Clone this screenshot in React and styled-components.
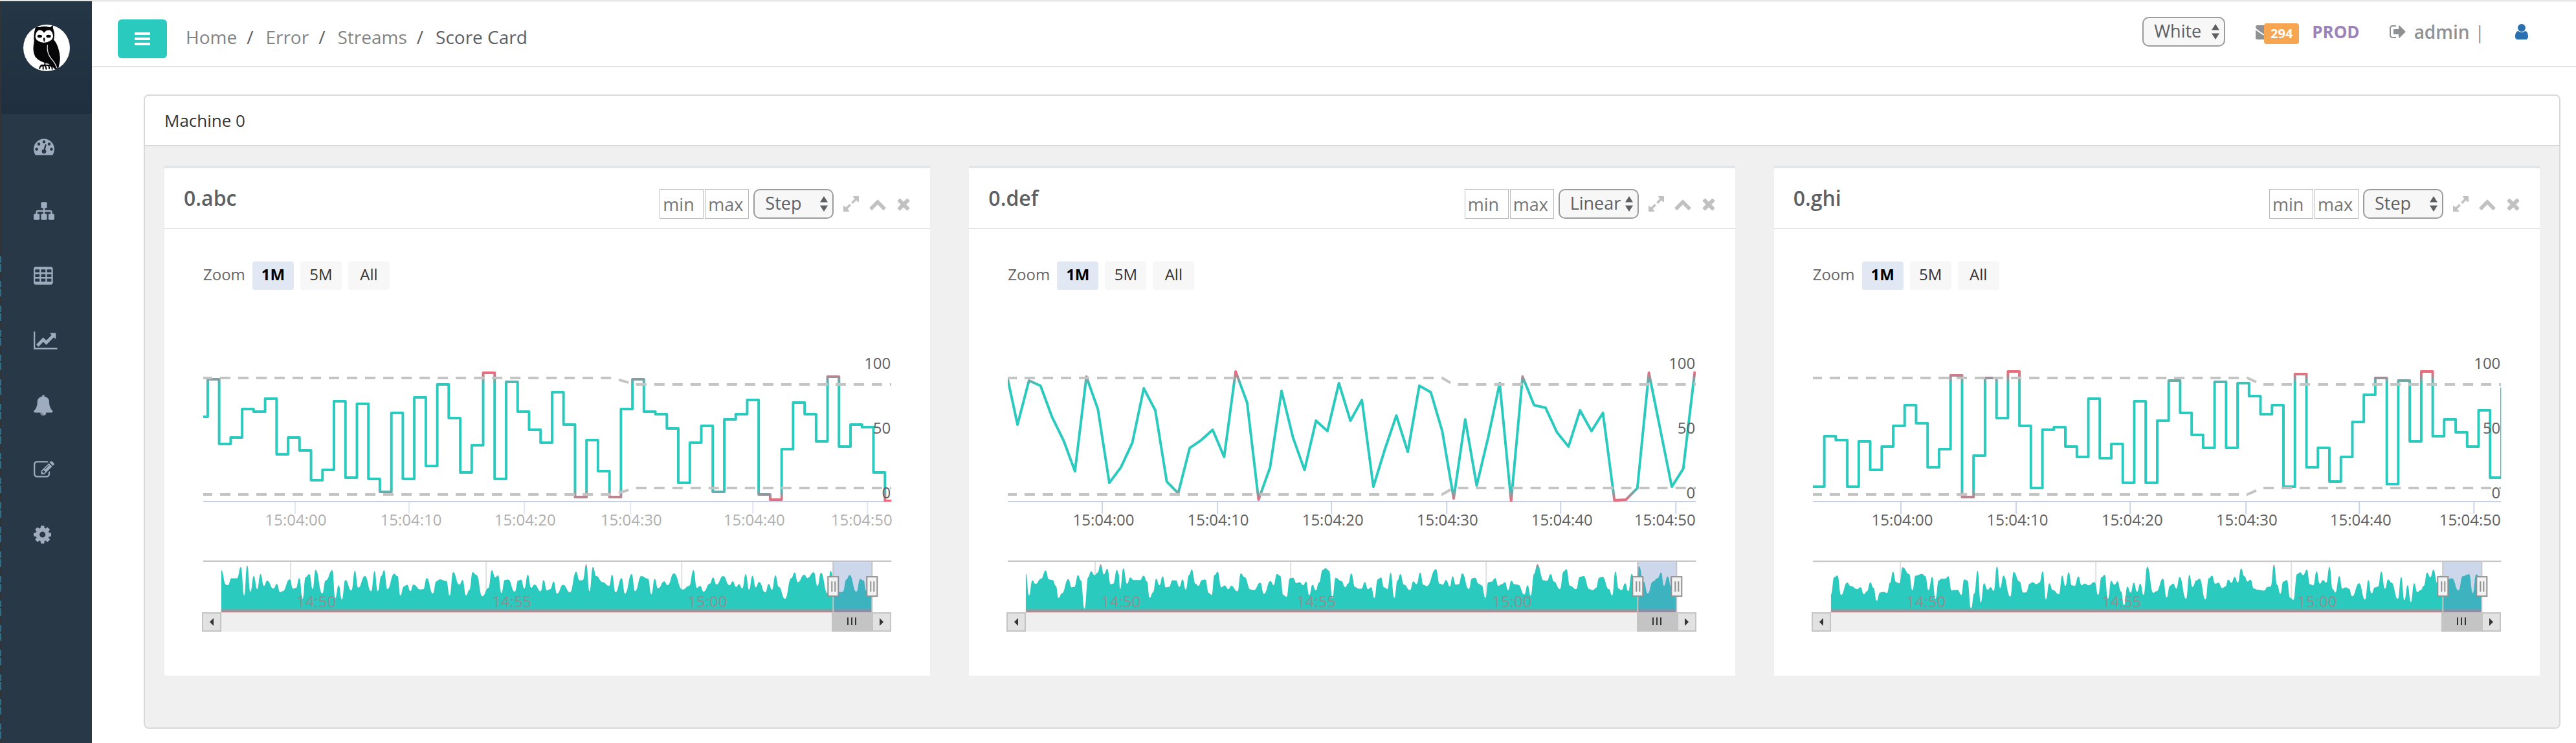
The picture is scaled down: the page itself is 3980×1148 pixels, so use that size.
import React from "react";
import styled, { createGlobalStyle } from "styled-components";

const GlobalStyle = createGlobalStyle`
  *, *::before, *::after { box-sizing: border-box; }
  body {
    margin: 0;
    background: #fff;
    color: #5c6063;
    font-family: "Open Sans", "Noto Sans", sans-serif;
    font-size: 28px;
  }
  button, input, select { font-family: inherit; }
`;

const TEAL = "#2bcabf";
const RED = "#ec6c7e";

/* ---------- icons (1792-unit grid) ---------- */

const ICONS = {
  dashboard: { x: 0, w: 1792, d: "M384 1152q0-53-37.5-90.5t-90.5-37.5-90.5 37.5-37.5 90.5 37.5 90.5 90.5 37.5 90.5-37.5 37.5-90.5zm192-448q0-53-37.5-90.5t-90.5-37.5-90.5 37.5-37.5 90.5 37.5 90.5 90.5 37.5 90.5-37.5 37.5-90.5zm428 481l101-382q6-26-7.5-48.5t-38.5-29.5-48 6.5-30 39.5l-101 382q-60 5-107 43.5t-63 98.5q-20 77 20 146t117 89 146-20 89-117q16-60-6-117t-72-91zm660-33q0-53-37.5-90.5t-90.5-37.5-90.5 37.5-37.5 90.5 37.5 90.5 90.5 37.5 90.5-37.5 37.5-90.5zm-640-640q0-53-37.5-90.5t-90.5-37.5-90.5 37.5-37.5 90.5 37.5 90.5 90.5 37.5 90.5-37.5 37.5-90.5zm448 192q0-53-37.5-90.5t-90.5-37.5-90.5 37.5-37.5 90.5 37.5 90.5 90.5 37.5 90.5-37.5 37.5-90.5zm320 448q0 261-141 483-19 29-54 29h-1402q-35 0-54-29-141-221-141-483 0-182 71-348t191-286 286-191 348-71 348 71 286 191 191 286 71 348z" },
  sitemap: { x: 0, w: 1792, d: "M1792 1248v320q0 40-28 68t-68 28h-320q-40 0-68-28t-28-68v-320q0-40 28-68t68-28h96v-192h-512v192h96q40 0 68 28t28 68v320q0 40-28 68t-68 28h-320q-40 0-68-28t-28-68v-320q0-40 28-68t68-28h96v-192h-512v192h96q40 0 68 28t28 68v320q0 40-28 68t-68 28h-320q-40 0-68-28t-28-68v-320q0-40 28-68t68-28h96v-192q0-52 38-90t90-38h512v-192h-96q-40 0-68-28t-28-68v-320q0-40 28-68t68-28h320q40 0 68 28t28 68v320q0 40-28 68t-68 28h-96v192h512q52 0 90 38t38 90v192h96q40 0 68 28t28 68z" },
  table: { x: 64, w: 1664, d: "M224 128h1344q66 0 113 47t47 113v1216q0 66-47 113t-113 47h-1344q-66 0-113-47t-47-113v-1216q0-66 47-113t113-47zM192 384v192q0 32 32 32h320q32 0 32-32v-192q0-32-32-32h-320q-32 0-32 32zM704 384v192q0 32 32 32h320q32 0 32-32v-192q0-32-32-32h-320q-32 0-32 32zM1216 384v192q0 32 32 32h320q32 0 32-32v-192q0-32-32-32h-320q-32 0-32 32zM192 784v192q0 32 32 32h320q32 0 32-32v-192q0-32-32-32h-320q-32 0-32 32zM704 784v192q0 32 32 32h320q32 0 32-32v-192q0-32-32-32h-320q-32 0-32 32zM1216 784v192q0 32 32 32h320q32 0 32-32v-192q0-32-32-32h-320q-32 0-32 32zM192 1184v192q0 32 32 32h320q32 0 32-32v-192q0-32-32-32h-320q-32 0-32 32zM704 1184v192q0 32 32 32h320q32 0 32-32v-192q0-32-32-32h-320q-32 0-32 32zM1216 1184v192q0 32 32 32h320q32 0 32-32v-192q0-32-32-32h-320q-32 0-32 32z" },
  chart: { x: 0, w: 2048, d: "M2048 1536v128h-2048v-1536h128v1408h1920zm-128-1248v435q0 21-19.500 29.500t-35.500-7.500l-121-121-633 633q-10 10-23 10t-23-10l-233-233-416 416-192-192 585-585q10-10 23-10t23 10l233 233 464-464-121-121q-16-16-7.500-35.500t29.500-19.500h435q14 0 23 9t9 23z" },
  bell: { x: 64, w: 1664, d: "M912 1696q0-16-16-16-59 0-101.500-42.500t-42.500-101.500q0-16-16-16t-16 16q0 73 51.500 124.500t124.500 51.500q16 0 16-16zm816-288q0 52-38 90t-90 38h-448q0 106-75 181t-181 75-181-75-75-181h-448q-52 0-90-38t-38-90q50-42 91-88t85-119.500 74.500-158.500 50-206 19.500-260q0-152 117-282.500t307-158.500q-8-19-8-39 0-40 28-68t68-28 68 28 28 68q0 20-8 39 190 28 307 158.500t117 282.500q0 139 19.500 260t50 206 74.500 158.500 85 119.500 91 88z" },
  edit: { x: 0, w: 1792, d: "M888 1184l116-116-152-152-116 116v56h96v96h56zm440-720q-16-16-33 1l-350 350q-17 17-1 33t33-1l350-350q17-17 1-33zm80 594v190q0 119-84.500 203.500t-203.500 84.500h-832q-119 0-203.500-84.500t-84.500-203.500v-832q0-119 84.500-203.500t203.500-84.500h832q63 0 117 25 15 7 18 23 3 17-9 29l-49 49q-14 14-32 8-23-6-45-6h-832q-66 0-113 47t-47 113v832q0 66 47 113t113 47h832q66 0 113-47t47-113v-126q0-13 9-22l64-64q15-15 35-7t20 29zm-96-738l288 288-672 672h-288v-288zm444 132l-92 92-288-288 92-92q28-28 68-28t68 28l152 152q28 28 28 68t-28 68z" },
  cog: { x: 128, w: 1536, d: "M1152 896q0-106-75-181t-181-75-181 75-75 181 75 181 181 75 181-75 75-181zm512-109v222q0 12-8 23t-20 13l-185 28q-19 54-39 91 35 50 107 138 10 12 10 25t-9 23q-27 37-99 108t-94 71q-12 0-26-9l-138-108q-44 23-91 38-16 136-29 186-7 28-36 28h-222q-14 0-24.500-8.500t-11.500-21.500l-28-184q-49-16-90-37l-141 107q-10 9-25 9-14 0-25-11-126-114-165-168-7-10-7-23 0-12 8-23 15-21 51-66.500t54-70.500q-27-50-41-99l-183-27q-13-2-21-12.500t-8-23.500v-222q0-12 8-23t19-13l186-28q14-46 39-92-40-57-107-138-10-12-10-24 0-10 9-23 26-36 98.500-107.500t94.500-71.500q13 0 26 10l138 107q44-23 91-38 16-136 29-186 7-28 36-28h222q14 0 24.500 8.500t11.500 21.500l28 184q49 16 90 37l142-107q9-9 24-9 13 0 25 10 129 119 165 170 7 8 7 22 0 12-8 23-15 21-51 66.500t-54 70.500q26 50 41 98l183 28q13 2 21 12.500t8 23.500z" },
  bars: { x: 128, w: 1536, d: "M1664 1344v128q0 26-19 45t-45 19h-1408q-26 0-45-19t-19-45v-128q0-26 19-45t45-19h1408q26 0 45 19t19 45zm0-512v128q0 26-19 45t-45 19h-1408q-26 0-45-19t-19-45v-128q0-26 19-45t45-19h1408q26 0 45 19t19 45zm0-512v128q0 26-19 45t-45 19h-1408q-26 0-45-19t-19-45v-128q0-26 19-45t45-19h1408q26 0 45 19t19 45z" },
  envelope: { x: 0, w: 1792, d: "M1792 710v794q0 66-47 113t-113 47h-1472q-66 0-113-47t-47-113v-794q44 49 101 87 362 246 497 345 57 42 92.500 65.500t94.500 48 110 24.500h2q51 0 110-24.500t94.500-48 92.500-65.500q170-123 498-345 57-39 100-87zm0-294q0 79-49 151t-122 123q-376 261-468 325-10 7-42.500 31t-54 38.500-52 32.500-57.500 27-50 9h-2q-23 0-50-9t-57.500-27-52-32.500-54-38.500-42.500-31q-91-64-262-182.500t-205-142.500q-62-42-117-115.500t-55-136.500q0-78 41.500-130t118.500-52h1472q65 0 112.500 47t47.500 113z" },
  signOut: { x: 64, w: 1664, d: "M704 1440q0 4 1 20t.5 26.500-3 23.500-10 19.500-20.500 6.500h-320q-119 0-203.500-84.500t-84.500-203.500v-704q0-119 84.500-203.500t203.500-84.500h320q13 0 22.500 9.500t9.500 22.500q0 4 1 20t.5 26.500-3 23.500-10 19.500-20.500 6.500h-320q-66 0-113 47t-47 113v704q0 66 47 113t113 47h312l11.500 1 11.500 3 8 5.500 7 9 2 13.500zm928-544q0 26-19 45l-544 544q-19 19-45 19t-45-19-19-45v-288h-448q-26 0-45-19t-19-45v-384q0-26 19-45t45-19h448v-288q0-26 19-45t45-19 45 19l544 544q19 19 19 45z" },
  user: { x: 256, w: 1280, d: "M1536 1399q0 109-62.500 187t-150.500 78h-854q-88 0-150.500-78t-62.500-187q0-85 8.500-160.500t31.500-152 58.500-131 94-89 134.500-34.500q131 128 313 128t313-128q76 0 134.500 34.500t94 89 58.500 131 31.500 152 8.500 160.500zm-256-887q0 159-112.500 271.500t-271.500 112.500-271.500-112.500-112.500-271.500 112.500-271.500 271.500-112.500 271.500 112.500 112.500 271.500z" },
  expand: { x: 128, w: 1536, d: "M883 1056q0 13-10 23l-332 332 144 144q19 19 19 45t-19 45-45 19h-448q-26 0-45-19t-19-45v-448q0-26 19-45t45-19 45 19l144 144 332-332q10-10 23-10t23 10l114 114q10 10 10 23zm781-864v448q0 26-19 45t-45 19-45-19l-144-144-332 332q-10 10-23 10t-23-10l-114-114q-10-10-10-23t10-23l332-332-144-144q-19-19-19-45t19-45 45-19h448q26 0 45 19t19 45z" },
  chevronUp: { x: 0, w: 1792, d: "M1683 1331l-166 165q-19 19-45 19t-45-19l-531-531-531 531q-19 19-45 19t-45-19l-166-165q-19-19-19-45.500t19-45.500l742-741q19-19 45-19t45 19l742 741q19 19 19 45.500t-19 45.500z" },
  times: { x: 192, w: 1408, d: "M1490 1322q0 40-28 68l-136 136q-28 28-68 28t-68-28l-294-294-294 294q-28 28-68 28t-68-28l-136-136q-28-28-28-68t28-68l294-294-294-294q-28-28-28-68t28-68l136-136q28-28 68-28t68 28l294 294 294-294q28-28 68-28t68 28l136 136q28 28 28 68t-28 68l-294 294 294 294q28 28 28 68z" },
};

const Glyph = styled.svg`
  display: block;
  flex: none;
  height: ${(p) => p.$size}px;
  fill: currentColor;
`;

function Icon({ name, size = 28 }) {
  const { x, w, d } = ICONS[name];
  return (
    <Glyph $size={size} viewBox={`${x} 0 ${w} 1792`} aria-hidden="true">
      <path fillRule={name === "table" ? "evenodd" : "nonzero"} d={d} />
    </Glyph>
  );
}

function Owl() {
  return (
    <svg width="72" height="72" viewBox="0 0 216 216" role="img" aria-label="Owl">
      <defs>
        <clipPath id="owl-disc"><circle cx="108" cy="108" r="108" /></clipPath>
      </defs>
      <circle cx="108" cy="108" r="108" fill="#fff" />
      <g clipPath="url(#owl-disc)">
        <path fill="#060507" d="M56 16 L62 5 Q66 14 76 12 Q96 4 120 12 Q130 14 132 5 L138 2 Q136 14 140 24 Q148 46 141 70 Q158 90 164 116 Q174 150 168 178 L160 216 L148 208 Q138 196 118 182 Q76 174 56 150 Q44 128 47 98 L50 78 Q46 48 56 16 Z" />
        <path fill="#fff" d="M96 38 Q86 22 70 26 Q56 36 56 58 Q60 80 96 84 Q132 80 138 58 Q138 34 124 26 Q108 22 96 38 Z" />
        <ellipse cx="76" cy="54" rx="11" ry="7" fill="#060507" />
        <ellipse cx="117" cy="54" rx="11" ry="7" fill="#060507" />
        <path fill="#060507" d="M96 60 Q105 62 97 82 Q88 64 96 60 Z" />
        <path fill="none" stroke="#ddd" strokeWidth="4" strokeLinecap="round" d="M112 96 Q108 130 128 156 Q148 178 155 200" />
        <path fill="none" stroke="#060507" strokeWidth="6" strokeLinecap="round" d="M76 204 Q76 190 92 190 Q92 200 92 206 M92 188 Q106 188 106 206 M108 188 Q122 188 120 204 M122 190 Q134 190 134 206 M100 180 V190 M82 188 H130" />
      </g>
    </svg>
  );
}

/* ---------- page frame ---------- */

const Page = styled.div`
  min-height: 100vh;
  display: flex;
  flex-direction: column;
`;

const WindowEdge = styled.div`
  height: 2px;
  border-bottom: 1px solid #a5a9a8;
`;

const Columns = styled.div`
  flex: 1;
  display: flex;
`;

const EdgeStrip = styled.div`
  flex: none;
  width: 2px;
  background:
    linear-gradient(#333 0 380px, transparent 380px),
    repeating-linear-gradient(#333 0 14px, #2e6f86 14px 24px, #333 24px 26px, #2e6f86 26px 38px);
`;

const Sidebar = styled.aside`
  flex: none;
  width: 140px;
  background: #293846;
`;

const Brand = styled.a`
  display: block;
  height: 174px;
  padding: 36px 34px;
  background: linear-gradient(#243746, #202f3f);
`;

const SideLink = styled.a`
  display: flex;
  align-items: center;
  height: 100px;
  padding-left: 50px;
  color: #9fabbe;
`;

const Main = styled.div`
  flex: 1;
  min-width: 0;
`;

const TopBar = styled.header`
  display: flex;
  align-items: flex-start;
  height: 102px;
  padding: 0 74px 0 40px;
  border-bottom: 2px solid #e2e6e9;
`;

const MenuButton = styled.button`
  display: flex;
  align-items: center;
  justify-content: center;
  width: 76px;
  height: 60px;
  margin-top: 28px;
  padding: 0;
  border: 0;
  border-radius: 6px;
  background: ${TEAL};
  color: #fff;
`;

const Crumbs = styled.ol`
  display: flex;
  flex: 1;
  margin: 35px 0 0 29px;
  padding: 0;
  list-style: none;
  line-height: 40px;
`;

const Crumb = styled.li`
  & + &::before {
    content: "/";
    padding: 0 19px 0 15px;
  }
  a { color: #828486; text-decoration: none; }
`;

const TopTools = styled.div`
  display: flex;
  align-items: center;
  height: 46px;
  margin-top: 24px;
  color: #8f9294;
`;

const SelectWrap = styled.span`
  position: relative;
  display: block;
  width: ${(p) => p.$width}px;
  svg { position: absolute; right: 9px; top: 11px; pointer-events: none; }
`;

const SelectBox = styled.select`
  appearance: none;
  display: block;
  width: 100%;
  height: 46px;
  padding: 0 0 4px 16px;
  border: 2px solid #9b9b9b;
  border-radius: 10px;
  background: #f7f7f7;
  color: #5c6063;
  font-size: 27px;
`;

function Picker({ label, value, options, width }) {
  return (
    <SelectWrap $width={width}>
      <SelectBox aria-label={label} defaultValue={value}>
        {options.map((o) => <option key={o}>{o}</option>)}
      </SelectBox>
      <svg width="12" height="24" viewBox="0 0 12 24" fill="#5c6063" aria-hidden="true">
        <path d="M6 0 12 9.500H0zM6 24 12 14.500H0z" />
      </svg>
    </SelectWrap>
  );
}

const MailLink = styled.a`
  position: relative;
  display: flex;
  margin-left: 47px;
  width: 67px;
  color: inherit;
`;

const Badge = styled.span`
  position: absolute;
  left: 13px;
  top: 1px;
  width: 54px;
  height: 32px;
  border-radius: 4px;
  background: #f8a552;
  color: #fff;
  font-size: 20px;
  font-weight: 700;
  line-height: 32px;
  text-align: center;
`;

const EnvName = styled.span`
  margin-left: 20px;
  color: #9b83b9;
  font-size: 26px;
  font-weight: 700;
`;

const LogoutLink = styled.a`
  display: flex;
  align-items: center;
  gap: 12px;
  margin: 0 8px 0 46px;
  color: inherit;
  font-size: 28px;
  font-weight: 600;
  text-decoration: none;
`;

const UserLink = styled.a`
  margin-left: 47px;
  color: #2a70b1;
`;

/* ---------- machine panel ---------- */

const Panel = styled.section`
  margin: 42px 24px 20px 80px;
  border: 2px solid #d8d8d8;
  border-radius: 8px;
  background: #f0f0f0;
  overflow: hidden;
`;

const PanelTitle = styled.h2`
  margin: 0;
  padding: 20px 30px;
  border-bottom: 2px solid #d8d8d8;
  background: #fff;
  color: #333;
  font-size: 26px;
  font-weight: 400;
  line-height: 36px;
`;

const CardGrid = styled.div`
  display: grid;
  grid-template-columns: repeat(3, minmax(0, 1fr));
  gap: 60px;
  padding: 30px 30px 80px;
`;

const Card = styled.article`
  border-top: 4px solid #e2e6e9;
  background: #fff;
`;

const CardHead = styled.header`
  display: flex;
  align-items: center;
  justify-content: space-between;
  height: 94px;
  padding: 0 30px;
  border-bottom: 2px solid #e2e6e9;
`;

const CardTitle = styled.h3`
  margin: 0;
  font-size: 32px;
  font-weight: 600;
  line-height: 44px;
`;

const CardTools = styled.div`
  display: flex;
  align-items: center;
  padding-top: 18px;
`;

const LimitInput = styled.input`
  width: 68px;
  height: 46px;
  margin-right: 2px;
  padding: 0 4px;
  border: 1px solid #b9b9b9;
  border-radius: 0;
  font-size: 27px;
  color: #5c6063;
  &::placeholder { color: #757575; opacity: 1; }
`;

const ToolGap = styled.div`
  margin-left: 5px;
`;

const IconButton = styled.button`
  margin-left: 15px;
  padding: 0;
  border: 0;
  background: none;
  color: #c1c1c1;
`;

const CardBody = styled.div`
  padding: 50px 60px 68px;
`;

const ZoomRow = styled.div`
  display: flex;
  align-items: center;
  gap: 10px;
  font-size: 24px;
  line-height: 34px;
  color: #666;
`;

const ZoomLabel = styled.span`
  width: 66px;
  padding-bottom: 4px;
`;

const ZoomButton = styled.button`
  width: 64px;
  height: 44px;
  padding: 0 0 6px;
  border: 0;
  border-radius: 4px;
  background: ${(p) => (p.$active ? "#e1e7f3" : "#f7f7f7")};
  color: ${(p) => (p.$active ? "#000" : "#333")};
  font-size: 24px;
  font-weight: ${(p) => (p.$active ? 700 : 400)};
`;

/* ---------- charts ---------- */

const Plot = styled.svg`
  display: block;
  width: 100%;
  height: auto;
  overflow: visible;
  font-size: 24px;
`;

const ScrollBar = styled.div`
  display: flex;
  height: 30px;
  margin-left: -2px;
  background: #efefef;
`;

const ScrollButton = styled.button`
  display: flex;
  align-items: center;
  justify-content: center;
  width: 30px;
  padding: 0;
  border: 2px solid #c4c4c4;
  background: #e2e2e2;
`;

const ScrollThumb = styled.div`
  display: flex;
  justify-content: center;
  gap: 4px;
  width: 62px;
  margin-left: auto;
  padding-top: 8px;
  background: #c4c4c4;
  i { width: 2px; height: 12px; background: #333; }
`;

const WIDTH = 1063;
const STEP = 17.73;
const yOf = (v) => 316 - 2 * v;

function stepPath(levels, first) {
  let d = `M0 ${yOf(levels[0])}`;
  levels.slice(1).forEach((v, i) => {
    d += `H${(first + STEP * i).toFixed(1)}V${yOf(v)}`;
  });
  return `${d}H1070`;
}

function linePath(levels, first) {
  return levels
    .map((v, i) => `${i ? "L" : "M"}${i ? (first + STEP * (i - 1)).toFixed(1) : 0} ${yOf(v)}`)
    .join("");
}

/* Overview samples are [x, depth] pairs; neighbours are joined by level-ended curves. */
function overviewPath({ samples, origin, scale, top }) {
  const pts = samples.split(" ").map((s) => {
    const [x, y] = s.split(",").map(Number);
    return [(x - origin) / scale, top + y / 3];
  });
  let d = `M${pts[0][0].toFixed(1)} 498V${pts[0][1].toFixed(1)}`;
  for (let i = 1; i < pts.length; i++) {
    const [x0, y0] = pts[i - 1];
    const [x1, y1] = pts[i];
    const m = ((x0 + x1) / 2).toFixed(1);
    d += `C${m} ${y0.toFixed(1)} ${m} ${y1.toFixed(1)} ${x1.toFixed(1)} ${y1.toFixed(1)}`;
  }
  return `${d}V498Z`;
}

const TIMES = ["15:04:00", "15:04:10", "15:04:20", "15:04:30", "15:04:40", "15:04:50"];
const OVERVIEW_TIMES = [["14:50", 135], ["14:55", 437], ["15:00", 739]];

function Handle({ x }) {
  return (
    <g>
      <rect x={x - 8} y="443" width="16" height="30" fill="#f2f2f2" stroke="#909090" strokeWidth="2" />
      <path d={`M${x - 2} 450v16M${x + 3} 450v16`} stroke="#909090" strokeWidth="2" />
    </g>
  );
}

function Chart({ id, mode, levels, first, bend, ticks, labels, faded, overview }) {
  const d = mode === "Linear" ? linePath(levels, first) : stepPath(levels, first);
  const [b0, b1] = bend;
  return (
    <Plot viewBox={`0 0 ${WIDTH} 498`} role="img" aria-label={`Score over time, ${id}`}>
      <defs>
        <linearGradient id={`line-${id}`} gradientUnits="userSpaceOnUse" x1="0" y1={yOf(95)} x2="0" y2={yOf(-5)}>
          <stop offset="0.01" stopColor={RED} />
          <stop offset="0.1" stopColor={TEAL} />
          <stop offset="0.9" stopColor={TEAL} />
          <stop offset="0.99" stopColor={RED} />
        </linearGradient>
        <linearGradient id={`area-${id}`} gradientUnits="userSpaceOnUse" x1="0" y1="423" x2="0" y2="498">
          <stop offset="0" stopColor={RED} />
          <stop offset="0.1" stopColor={TEAL} />
          <stop offset="0.91" stopColor={TEAL} />
          <stop offset="1" stopColor="#dc7585" />
        </linearGradient>
        <clipPath id={`clip-${id}`}><rect x="0" y="100" width={WIDTH} height="227" /></clipPath>
      </defs>

      <path d={`M0 327H${WIDTH}`} stroke="#c5cfe8" strokeWidth="2" />
      {ticks.map((x) => (
        <path key={x} d={`M${x} 328v18`} stroke={faded ? "#e1e6f4" : "#c9d3ea"} strokeWidth="2" />
      ))}
      {TIMES.map((t, i) => (
        <text key={t} x={labels[i]} y="364" textAnchor="middle" fill={faded ? "#b0b0b0" : "#606060"}>{t}</text>
      ))}

      <g clipPath={`url(#clip-${id})`} fill="none" strokeWidth="4">
        <path d={d} stroke={`url(#line-${id})`} strokeLinejoin="round" />
        <g stroke="#c4c4c4" strokeDasharray="16 12" strokeDashoffset="2">
          <path d={`M0 ${yOf(90)}H${b0}L${b1} ${yOf(85)}H${WIDTH}`} />
          <path d={`M0 ${yOf(0)}H${b0}L${b1} ${yOf(5)}H${WIDTH}`} />
        </g>
      </g>
      {[100, 50, 0].map((v) => (
        <text key={v} x="1062" y={yOf(v) + 6} textAnchor="end" fill="#606060">{v}</text>
      ))}

      {OVERVIEW_TIMES.map(([t, x]) => (
        <path key={t} d={`M${x} 420V498`} stroke="#e0e0e0" strokeWidth="2" />
      ))}
      <path d={overviewPath(overview)} fill={`url(#area-${id})`} />
      {OVERVIEW_TIMES.map(([t, x]) => (
        <text key={t} x={x + 9} y="490" fill="#8f8f8f">{t}</text>
      ))}
      <rect x="973" y="420" width="60" height="78" fill="#6685c2" fillOpacity="0.33" />
      <path d={`M0 419H${WIDTH}M973 419V498M1033 419V498`} stroke="#c4c4c4" strokeWidth="2" />
      <Handle x={973} />
      <Handle x={1033} />
    </Plot>
  );
}

const CHARTS = [
  {
    id: "abc",
    mode: "Step",
    faded: true,
    first: 6.9,
    bend: [633, 667],
    ticks: [142, 318, 496, 660, 849, 1026],
    labels: [143, 321, 497, 661, 851, 1017],
    levels: [60, 89, 39, 44, 66, 64, 74, 31, 44, 34, 11, 19, 72, 13, 70, 12, 2, 63, 12, 75, 22, 85, 59, 17, 38, 94, 12, 87, 64, 50, 40, 79, 54, -2, 42, 18, -2, 66, 89, 64, 62, 51, 9, 40, 53, 2, 58, 62, 73, 0, -4, 35, 71, 62, 41, 91, 37, 54, 52, 17, -5],
    overview: {
      origin: 32.4, scale: 1.3517, top: 392,
      samples: "70,123 80,190 84,192 91,160 103,160 111,108 118,240 124,100 131,222 138,150 145,210 152,141 159,195 166,171 179,208 186,186 193,224 198,220 213,165 220,208 226,205 233,159 240,255 246,155 254,141 261,210 267,121 281,230 288,170 302,123 308,252 315,192 322,258 329,168 342,216 349,126 356,204 370,150 383,220 390,127 397,220 404,150 410,123 417,210 431,139 438,150 444,240 451,198 458,190 465,219 471,189 486,212 492,210 499,159 512,230 519,174 526,165 540,172 547,240 554,132 567,189 574,168 581,240 588,215 595,132 603,145 615,243 628,205 635,123 642,156 648,147 655,228 662,168 669,166 683,222 690,170 696,166 703,208 710,144 717,204 724,189 737,220 743,168 750,216 757,210 764,175 771,231 784,190 798,225 811,130 818,170 825,168 832,95 839,220 846,108 853,150 866,178 880,195 886,144 893,225 906,159 913,231 927,141 934,220 947,150 961,162 968,234 975,162 982,207 995,174 1002,192 1015,138 1033,212 1047,195 1056,123 1063,204 1070,195 1077,222 1090,185 1097,156 1104,189 1118,150 1131,192 1138,174 1145,200 1151,187 1158,207 1165,141 1172,213 1179,148 1186,201 1193,177 1206,225 1213,186 1220,213 1227,147 1234,200 1247,255 1260,160 1267,133 1274,178 1287,144 1294,159 1307,132 1315,195 1322,135 1336,230 1342,126 1350,170 1362,225 1368,222 1375,165 1382,145 1396,222 1404,163 1411,170 1417,220 1429,180",
    },
  },
  {
    id: "def",
    mode: "Linear",
    first: 15.1,
    bend: [671, 688],
    ticks: [146, 324, 500, 678, 854, 1032],
    labels: [148, 325, 502, 679, 856, 1015],
    levels: [89, 54, 88, 84, 60, 42, 18, 91, 66, 9, 21, 40, 82, 65, 10, 1, 36, 42, 50, 29, 95, 71, -4, 21, 80, 44, 19, 57, 49, 86, 57, 73, 6, 35, 61, 33, 84, 79, 49, -3, 58, 7, 44, 86, -5, 91, 69, 67, 48, 37, 65, 49, 63, -4.5, -4, 5, 94, 50, 6, 20, 95],
    overview: {
      origin: 25, scale: 1.4, top: 402,
      samples: "64,108 71,210 78,140 85,156 97,132 107,94 114,135 122,138 129,165 135,221 142,200 156,134 163,172 169,170 177,116 183,140 191,271 199,125 205,98 213,116 219,104 226,66 233,112 240,87 248,158 253,155 261,91 265,110 268,180 275,84 283,155 290,126 297,138 311,138 319,118 326,145 332,220 339,195 346,132 353,162 360,121 367,172 374,170 381,139 389,140 396,170 403,135 410,182 417,115 423,90 431,155 437,165 445,138 452,135 460,198 466,207 472,115 479,101 487,172 494,163 502,180 508,165 522,190 529,108 537,125 550,182 557,185 571,150 579,202 593,143 600,162 607,111 614,118 621,207 628,216 635,130 642,128 649,152 656,148 664,162 670,145 677,208 684,160 691,186 698,150 706,92 712,84 720,95 727,222 734,128 746,142 755,171 761,155 768,108 776,170 783,178 790,178 797,147 804,180 811,172 818,221 825,135 832,126 839,172 846,180 853,105 861,221 868,140 874,111 882,160 895,185 902,144 909,157 917,104 924,160 931,166 951,88 959,155 965,160 973,138 981,168 987,121 994,160 1000,158 1008,108 1022,180 1029,130 1036,128 1043,155 1050,163 1058,221 1064,148 1071,146 1079,129 1086,165 1093,158 1100,148 1107,185 1114,141 1121,158 1129,160 1142,205 1149,162 1156,210 1163,110 1170,66 1184,140 1191,142 1199,111 1206,145 1219,180 1227,98 1233,88 1241,165 1254,180 1262,124 1270,120 1283,180 1290,185 1297,175 1304,127 1311,123 1325,180 1332,210 1339,99 1346,178 1352,185 1360,153 1367,190 1374,110 1382,150 1390,75 1400,145 1409,200 1420,145 1430,130 1438,104 1444,165 1452,122 1460,170 1472,140",
    },
  },
  {
    id: "ghi",
    mode: "Step",
    first: 17.6,
    bend: [671, 693],
    ticks: [136, 314, 490, 669, 844, 1021],
    labels: [138, 316, 493, 670, 846, 1015],
    levels: [6, 45, 42, 6, 41, 19, 37, 53, 69, 55, 21, 35, 92, -2, 30, 90, 59, 95, 53, 5, 50, 52, 37, 29, 74, 28, 39, 9, 72, 9, 57, 88, 63, 46, 36, 87, 36, 86, 76, 62, 69, 6, 93, 21, 36, 10, 29, 56, 77, 90, 8, 88, 41, 95, 45, 58, 48, 37, 65, 13, 82],
    overview: {
      origin: 28, scale: 1.4, top: 402,
      samples: "67,205 74,125 81,117 89,207 102,150 110,166 124,180 131,171 138,204 145,190 152,149 159,175 166,234 173,196 181,193 188,198 195,150 201,99 208,148 215,153 222,79 236,110 243,186 250,118 264,110 271,120 278,185 286,123 293,225 300,140 306,132 314,132 321,121 328,186 341,184 349,207 355,135 362,140 370,270 377,200 384,95 391,242 398,153 406,183 412,171 419,188 426,75 433,175 440,118 455,215 462,101 475,145 483,196 489,195 497,155 503,148 511,157 518,150 525,98 532,228 539,153 547,185 560,204 567,117 574,165 581,102 588,162 594,165 602,122 609,162 616,155 624,162 637,147 645,207 652,125 659,114 666,225 673,142 680,160 687,144 694,190 701,255 708,168 715,196 722,150 729,192 736,155 743,207 751,76 764,197 771,190 785,132 793,219 800,165 807,155 814,178 821,124 835,225 842,114 849,170 857,140 864,132 877,228 884,130 891,118 898,155 905,150 913,175 920,168 926,136 933,151 940,123 947,150 954,84 961,120 968,145 974,136 982,178 990,183 1004,187 1011,170 1018,168 1025,66 1032,160 1039,202 1045,145 1053,138 1060,220 1067,230 1075,110 1082,102 1088,115 1096,90 1103,158 1110,163 1117,98 1124,155 1131,138 1138,150 1145,77 1152,180 1158,195 1166,120 1173,178 1180,172 1187,178 1194,213 1209,153 1222,228 1229,138 1236,200 1243,172 1250,168 1257,99 1265,178 1272,135 1279,150 1293,225 1300,123 1307,231 1314,162 1321,240 1328,153 1335,194 1342,185 1349,165 1356,104 1363,125 1370,90 1378,150 1385,118 1400,135 1410,130 1424,186 1433,120 1447,111 1455,198 1462,112 1475,140",
    },
  },
];

function ChartCard(chart) {
  return (
    <Card>
      <CardHead>
        <CardTitle>0.{chart.id}</CardTitle>
        <CardTools>
          <LimitInput aria-label={`Minimum for 0.${chart.id}`} placeholder="min" />
          <LimitInput aria-label={`Maximum for 0.${chart.id}`} placeholder="max" />
          <ToolGap>
            <Picker label={`Line style for 0.${chart.id}`} value={chart.mode} options={["Step", "Linear"]} width={124} />
          </ToolGap>
          <IconButton aria-label="Expand"><Icon name="expand" /></IconButton>
          <IconButton aria-label="Collapse"><Icon name="chevronUp" /></IconButton>
          <IconButton aria-label="Close"><Icon name="times" /></IconButton>
        </CardTools>
      </CardHead>
      <CardBody>
        <ZoomRow>
          <ZoomLabel>Zoom</ZoomLabel>
          <ZoomButton $active>1M</ZoomButton>
          <ZoomButton>5M</ZoomButton>
          <ZoomButton>All</ZoomButton>
        </ZoomRow>
        <Chart {...chart} />
        <ScrollBar>
          <ScrollButton aria-label="Scroll back">
            <svg width="6" height="12" viewBox="0 0 6 12" fill="#333"><path d="M6 0v12L0 6z" /></svg>
          </ScrollButton>
          <ScrollThumb><i /><i /><i /></ScrollThumb>
          <ScrollButton aria-label="Scroll forward">
            <svg width="6" height="12" viewBox="0 0 6 12" fill="#333"><path d="M0 0v12l6-6z" /></svg>
          </ScrollButton>
        </ScrollBar>
      </CardBody>
    </Card>
  );
}

const NAV = [
  ["dashboard", "Dashboard"],
  ["sitemap", "Topology"],
  ["table", "Tables"],
  ["chart", "Charts"],
  ["bell", "Alerts"],
  ["edit", "Edit"],
  ["cog", "Settings"],
];

export default function App() {
  return (
    <Page>
      <GlobalStyle />
      <WindowEdge />
      <Columns>
        <EdgeStrip />
        <Sidebar>
          <Brand href="#"><Owl /></Brand>
          <nav>
            {NAV.map(([icon, label]) => (
              <SideLink key={icon} href="#" aria-label={label}><Icon name={icon} size={32} /></SideLink>
            ))}
          </nav>
        </Sidebar>
        <Main>
          <TopBar>
            <MenuButton aria-label="Toggle menu"><Icon name="bars" /></MenuButton>
            <Crumbs>
              <Crumb><a href="#">Home</a></Crumb>
              <Crumb><a href="#">Error</a></Crumb>
              <Crumb><a href="#">Streams</a></Crumb>
              <Crumb>Score Card</Crumb>
            </Crumbs>
            <TopTools>
              <Picker label="Theme" value="White" options={["White", "Dark"]} width={128} />
              <MailLink href="#" aria-label="294 messages">
                <Icon name="envelope" />
                <Badge>294</Badge>
              </MailLink>
              <EnvName>PROD</EnvName>
              <LogoutLink href="#"><Icon name="signOut" />admin</LogoutLink>
              <span>|</span>
              <UserLink href="#" aria-label="Profile"><Icon name="user" /></UserLink>
            </TopTools>
          </TopBar>
          <Panel>
            <PanelTitle>Machine 0</PanelTitle>
            <CardGrid>
              {CHARTS.map((c) => <ChartCard key={c.id} {...c} />)}
            </CardGrid>
          </Panel>
        </Main>
      </Columns>
    </Page>
  );
}
